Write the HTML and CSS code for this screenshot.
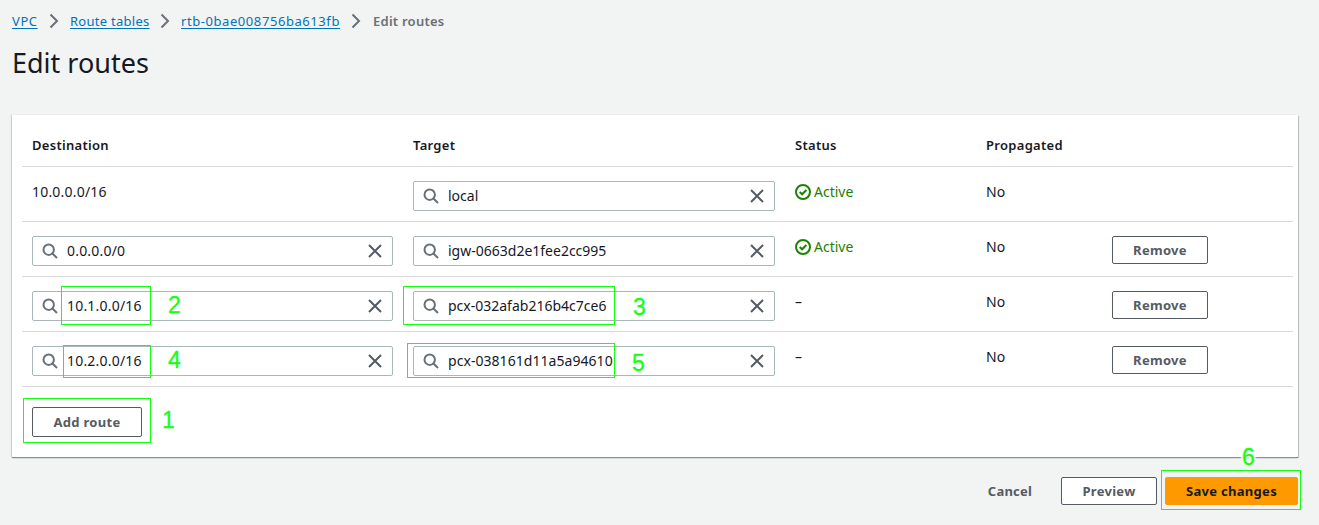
FILE: index.html
```
<!DOCTYPE html>
<html lang="en">
<head>
<meta charset="utf-8">
<title>Edit routes</title>
<link rel="stylesheet" href="styles.css">
</head>
<body>
<svg class="defs" width="0" height="0">
  <symbol id="chevron" viewBox="0 0 10 16"><path d="M1.500 1.500 8 8l-6.500 6.500" fill="none" stroke="#687078" stroke-width="2"/></symbol>
  <symbol id="search" viewBox="0 0 16 16"><circle cx="6.700" cy="6.700" r="5.200" fill="none" stroke="#687078" stroke-width="2"/><path d="m10.200 10.200 4.800 4.800" stroke="#687078" stroke-width="2"/></symbol>
  <symbol id="close" viewBox="0 0 14 14"><path d="m1 1 12 12M13 1 1 13" stroke="#545b64" stroke-width="2"/></symbol>
  <symbol id="check" viewBox="0 0 16 16"><circle cx="8" cy="8" r="7" fill="none" stroke="#1d8102" stroke-width="2"/><path d="m4.700 8 2.400 2.300 4.300-4.300" fill="none" stroke="#1d8102" stroke-width="2"/></symbol>
</svg>
<main class="page">
  <nav class="crumbs">
    <a class="c-vpc">VPC</a><svg><use href="#chevron"/></svg>
    <a class="c-tables">Route tables</a><svg><use href="#chevron"/></svg>
    <a class="c-id">rtb-0bae008756ba613fb</a><svg><use href="#chevron"/></svg>
    <b>Edit routes</b>
  </nav>
  <h1>Edit routes</h1>
  <section class="card">
    <div class="row head"><span>Destination</span><span>Target</span><span>Status</span><span class="h-prop">Propagated</span></div>
    <div class="row">
      <span class="value ip">10.0.0.0/16</span>
      <div class="field"><svg class="search"><use href="#search"/></svg><span>local</span><svg class="close"><use href="#close"/></svg></div>
      <span class="value active"><svg><use href="#check"/></svg>Active</span><span class="value">No</span>
    </div>
    <div class="row">
      <div class="field"><svg class="search"><use href="#search"/></svg><span class="ip">0.0.0.0/0</span><svg class="close"><use href="#close"/></svg></div>
      <div class="field"><svg class="search"><use href="#search"/></svg><span>igw-0663d2e1fee2cc995</span><svg class="close"><use href="#close"/></svg></div>
      <span class="value active"><svg><use href="#check"/></svg>Active</span><span class="value">No</span>
      <button class="btn">Remove</button>
    </div>
    <div class="row">
      <div class="field"><svg class="search"><use href="#search"/></svg><span class="ip">10.1.0.0/16</span><svg class="close"><use href="#close"/></svg></div>
      <div class="field"><svg class="search"><use href="#search"/></svg><span>pcx-032afab216b4c7ce6</span><svg class="close"><use href="#close"/></svg></div>
      <span class="value">–</span><span class="value">No</span>
      <button class="btn">Remove</button>
    </div>
    <div class="row">
      <div class="field"><svg class="search"><use href="#search"/></svg><span class="ip">10.2.0.0/16</span><svg class="close"><use href="#close"/></svg></div>
      <div class="field"><svg class="search"><use href="#search"/></svg><span class="pcx-b">pcx-038161d11a5a94610</span><svg class="close"><use href="#close"/></svg></div>
      <span class="value">–</span><span class="value">No</span>
      <button class="btn">Remove</button>
    </div>
    <div class="add"><button class="btn btn-add">Add route</button></div>
  </section>
  <footer class="actions"><a class="cancel">Cancel</a><button class="btn">Preview</button><button class="btn primary">Save changes</button></footer>
</main>
<!-- Step annotations over the form -->
<div class="mark m1"></div><span class="step s1">1</span>
<div class="mark m2"></div><span class="step s2">2</span>
<div class="mark m3"></div><span class="step s3">3</span>
<div class="mark m4"></div><span class="step s4">4</span>
<div class="mark m5"></div><span class="step s5">5</span>
<div class="mark m6"></div><span class="step s6">6</span>
</body>
</html>
```
FILE: styles.css
```
* { box-sizing: border-box; }
body { margin: 0; height: 525px; overflow: hidden; position: relative; background: #f2f3f3; color: #16191f; font: 14px/20px "Noto Sans", sans-serif; }
.defs { position: absolute; }
.page { padding: 11px 20px 0 12px; }
.crumbs { display: flex; align-items: center; height: 20px; font-size: 13px; white-space: nowrap; color: #687078; }
.crumbs a { color: #0073bb; text-decoration: underline; text-underline-offset: 2px; }
.crumbs svg { width: 10px; height: 16px; margin: 0 11px; flex: none; }
.c-vpc { width: 26px; letter-spacing: .6px; }
.c-tables { width: 79px; letter-spacing: .27px; }
.c-id { width: 159px; letter-spacing: .57px; }
.crumbs b { margin-left: 1px; font-weight: 600; letter-spacing: .25px; }
h1 { margin: 14px 0 0; height: 36px; font-size: 27px; line-height: 36px; font-weight: 400; }
.card { width: 1286px; height: 342px; margin-top: 34px; padding: 0 5px 0 10px; background: #fff; box-shadow: 0 1px 1px #879196, 1px 1px 1px #c5cccd, -1px 0 1px #d5dbdb; }
.row { display: grid; grid-template-columns: 361px 362px 171px 106px 96px; column-gap: 20px; align-items: start; height: 55px; padding: 14px 10px 0; border-bottom: 1px solid #d9dbdb; }
.head { height: 52px; padding-top: 20px; font-size: 13px; font-weight: 600; letter-spacing: .3px; }
.value { padding-top: 1px; white-space: nowrap; }
.ip { letter-spacing: .2px; }
.pcx-b { letter-spacing: .05px; }
.field { display: flex; align-items: center; height: 30px; padding: 0 10px 0 9px; border: 1px solid #aab7b8; border-radius: 2px; background: #fff; }
.field span { margin-left: 9px; flex: 1; white-space: nowrap; }
.search { width: 16px; height: 16px; flex: none; }
.close { width: 14px; height: 14px; flex: none; }
.active { display: flex; gap: 3px; color: #1d8102; }
.active svg { width: 16px; height: 16px; margin-top: 2px; }
.btn { width: 96px; height: 28px; padding: 0; border: 1px solid #545b64; border-radius: 2px; background: #fff; color: #545b64; font: 700 13px/20px "Noto Sans", sans-serif; letter-spacing: .3px; white-space: nowrap; }
.add { padding: 20px 10px 0; }
.btn-add { display: block; width: 110px; height: 30px; }
.actions { display: flex; justify-content: flex-end; align-items: center; width: 1286px; margin-top: 20px; height: 28px; }
.cancel { margin-right: 29px; color: #545b64; font-size: 13px; font-weight: 700; letter-spacing: .2px; }
.primary { width: 133px; margin-left: 8px; border-color: #ff9900; background: #ff9900; color: #16191f; }
.mark { position: absolute; border: 1px solid #14ff14; }
.m1 { left: 23px; top: 398px; width: 128px; height: 45px; }
.m2 { left: 61px; top: 286px; width: 90px; height: 39px; }
.m3 { left: 403px; top: 286px; width: 212px; height: 39px; }
.m4 { left: 63px; top: 345px; width: 88px; height: 33px; }
.m5 { left: 407px; top: 343px; width: 208px; height: 35px; }
.m6 { left: 1161px; top: 470px; width: 140px; height: 40px; }
.step { position: absolute; color: #14ff14; font: 23px/24px "Liberation Sans", sans-serif; text-shadow: 0 0 2px #fff; -webkit-text-stroke: .3px #14ff14; }
.s1 { left: 162px; top: 408px; }
.s2 { left: 168px; top: 293px; }
.s3 { left: 633px; top: 295px; }
.s4 { left: 168px; top: 348px; }
.s5 { left: 632px; top: 351px; }
.s6 { left: 1242px; top: 445px; text-shadow: 2px 0 1px #f7f8f8, -2px 0 1px #f7f8f8, 0 2px 1px #f7f8f8, 0 -2px 1px #f7f8f8; }
```
